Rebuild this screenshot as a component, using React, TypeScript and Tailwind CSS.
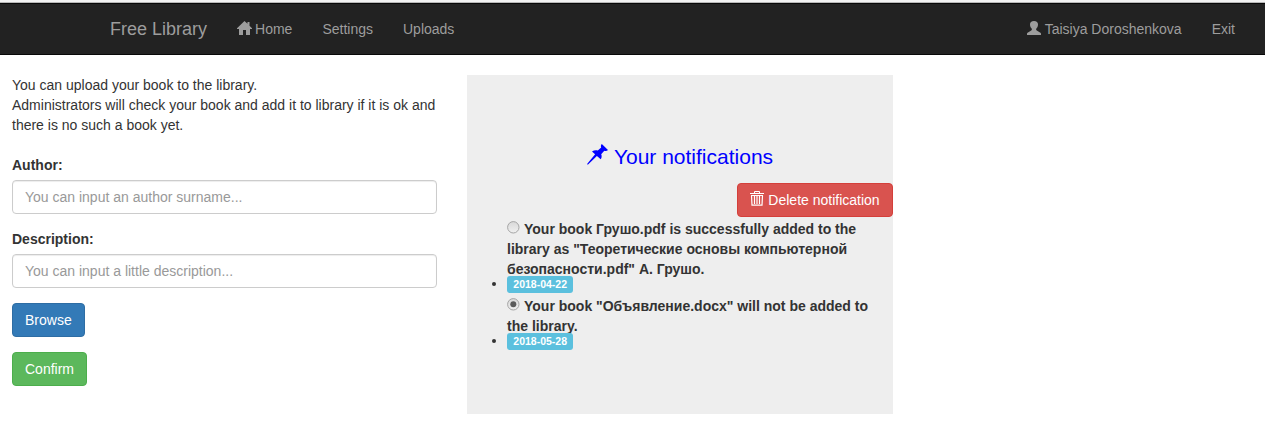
import type { ReactNode } from "react";

function HomeIcon() {
  return (
    <svg viewBox="0 0 15 14" className="-mt-0.5 -mr-px h-3.5 w-[15px] shrink-0" fill="currentColor">
      <path d="M7.5 0 L10.5 2.8 V1 H12.5 V4.7 L15 7.2 V8 H13 V14 H9 V9 H6 V14 H2 V8 H0 V7.2 Z" />
    </svg>
  );
}

function UserIcon() {
  return (
    <svg viewBox="0 0 14 14" className="-mt-0.5 h-3.5 w-3.5 shrink-0" fill="currentColor">
      <path d="M7 0 C9.6 0 11 1.3 11 3.4 C11 4.9 10.5 6.1 9.7 7.1 C9 8 8.8 9 9.8 9.6 L13 11.4 C13.7 11.8 14 12.2 14 12.8 V14 H0 V12.8 C0 12.2 0.3 11.8 1 11.4 L4.2 9.6 C5.2 9 5 8 4.3 7.1 C3.5 6.1 3 4.9 3 3.4 C3 1.3 4.4 0 7 0 Z" />
    </svg>
  );
}

function PinIcon() {
  return (
    <svg viewBox="0 0 21 21" className="h-[21px] w-[21px] shrink-0" fill="currentColor">
      <path d="M14.8 0 L21 6.1 C20 7.1 18.6 7.3 17.3 6.8 L14.2 10.2 C15 12 14.7 13.8 13.7 15.2 L9.9 11.9 L0.8 20.7 L0.1 20 L8.1 10.2 L5 7.5 C6.9 6.2 9 6 10.8 6.6 L14.2 3.6 C13.6 2.3 13.9 1 14.8 0 Z" />
    </svg>
  );
}

function TrashIcon() {
  return (
    <svg viewBox="0 0 14 15" className="-mt-[3px] h-[15px] w-3.5 shrink-0" fill="none" stroke="currentColor">
      <path d="M0 2.5 H14 M4.5 2.5 V0.5 H9.5 V2.5 M1 4.5 H13" />
      <path d="M1.5 4.5 L2 14.2 H12 L12.5 4.5 M4.5 5 V13 M7 5 V13 M9.5 5 V13" strokeWidth="1.2" />
    </svg>
  );
}

function Radio({ checked }: { checked?: boolean }) {
  return (
    <svg viewBox="0 0 13 13" className="mr-1 inline-block h-[13px] w-[13px] align-[0px]">
      <defs>
        <linearGradient id="radioFill" x1="0" y1="0" x2="0" y2="1">
          <stop offset="0" stopColor="#d8d8d8" />
          <stop offset="1" stopColor="#f0f0f0" />
        </linearGradient>
      </defs>
      <circle cx="6.3" cy="6.3" r="5.7" fill="url(#radioFill)" stroke="#a5a5a5" />
      {checked && <circle cx="6.3" cy="6.3" r="3" fill="#5b5b5b" />}
    </svg>
  );
}

function Field({ label, placeholder }: { label: string; placeholder: string }) {
  return (
    <div className="mb-[15px]">
      <label className="mb-[5px] block font-bold">{label}</label>
      <input
        type="text"
        placeholder={placeholder}
        className="block h-[34px] w-full rounded border border-[#ccc] bg-white px-3 py-1.5 shadow-[inset_0_1px_1px_rgba(0,0,0,0.075)] placeholder:text-[#999]"
      />
    </div>
  );
}

function Notification({ date, checked, children }: { date: string; checked?: boolean; children: ReactNode }) {
  return (
    <li className="mb-[3px]">
      <label className="block font-bold">
        <Radio checked={checked} />
        {children}
      </label>
      <div className="-mt-[3px] flex h-[17px]">
        <span className="-ml-[15px] mr-[11px] mt-[6px] h-1 w-1 shrink-0 rounded-full bg-[#333]" />
        <span className="rounded-[3px] bg-[#5bc0de] px-[6.3px] text-[10.5px] leading-[17px] font-bold text-white">{date}</span>
      </div>
    </li>
  );
}

export default function App() {
  return (
    <div className="h-[442px] overflow-hidden bg-white font-['Liberation_Sans',Arial,sans-serif] text-[14px] leading-5 text-[#333]">
      <div className="h-[3px] border-b border-[#b8b8b8] bg-[#f2f2f2]" />
      <nav className="flex h-[52px] items-center border-y border-[#080808] bg-[#222] pl-[110px] pr-[30px] text-[#9d9d9d]">
        <a className="mr-[30px] text-[18px]">Free Library</a>
        <a className="mr-[30px] flex items-center gap-1">
          <HomeIcon />
          Home
        </a>
        <a className="mr-[30px]">Settings</a>
        <a>Uploads</a>
        <a className="mr-[30px] ml-auto flex items-center gap-1">
          <UserIcon />
          Taisiya Doroshenkova
        </a>
        <a>Exit</a>
      </nav>
      <main className="flex items-start gap-[30px] pt-5 pl-3">
        <form className="w-[425px]">
          <p className="mb-5">
            You can upload your book to the library.
            <br />
            Administrators will check your book and add it to library if it is ok and there is no such a book yet.
          </p>
          <Field label="Author:" placeholder="You can input an author surname..." />
          <Field label="Description:" placeholder="You can input a little description..." />
          <button type="button" className="mb-[15px] block h-[34px] rounded border border-[#2e6da4] bg-[#337ab7] px-3 text-white">
            Browse
          </button>
          <button type="button" className="block h-[34px] rounded border border-[#4cae4c] bg-[#5cb85c] px-3 text-white">
            Confirm
          </button>
        </form>
        <section className="h-[339px] w-[426px] bg-[#eee] pt-[67px]">
          <h2 className="flex h-[30px] items-center justify-center gap-1.5 text-[21px] leading-[30px] text-[#00f]">
            <span className="-mt-[5px]">
              <PinIcon />
            </span>
            Your notifications
          </h2>
          <div className="mt-[11px] flex justify-end">
            <button type="button" className="flex h-[34px] w-[156px] items-center justify-center gap-1 rounded border border-[#d43f3a] bg-[#d9534f] text-white">
              <TrashIcon />
              Delete notification
            </button>
          </div>
          <ul className="mt-[2px] pl-10 pr-3">
            <Notification date="2018-04-22">
              Your book Грушо.pdf is successfully added to the library as "Теоретические основы компьютерной безопасности.pdf" А. Грушо.
            </Notification>
            <Notification date="2018-05-28" checked>
              Your book "Объявление.docx" will not be added to the library.
            </Notification>
          </ul>
        </section>
      </main>
    </div>
  );
}
